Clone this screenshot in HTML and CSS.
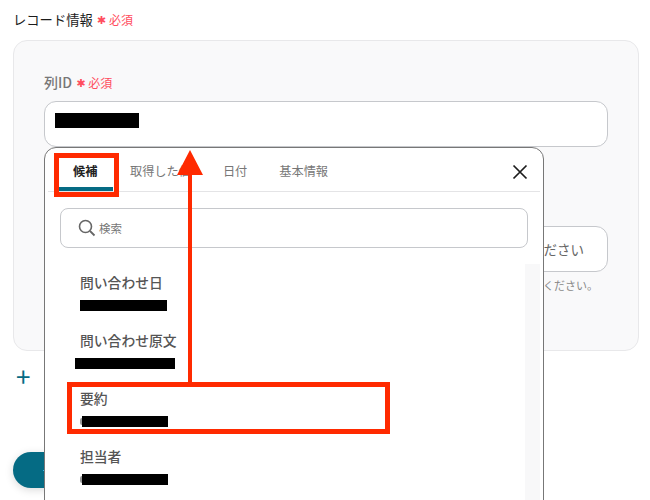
FILE: index.html
```html
<!DOCTYPE html>
<html lang="ja">
<head>
  <meta charset="UTF-8">
  <meta name="viewport" content="width=device-width, initial-scale=1.0">
  <title>レコード情報</title>
  <link rel="stylesheet" href="styles.css">
</head>
<body>
  <div class="page">
    <div class="section-title">
      <span class="title-text">レコード情報</span>
      <span class="required"><span class="star">✱</span>必須</span>
    </div>

    <div class="card">
      <div class="field-label">
        <span class="label-text">列ID</span>
        <span class="required"><span class="star">✱</span>必須</span>
      </div>
      <div class="field-input first-input"><span class="mask mask-value"></span></div>

      <div class="field-input second-input">選択してください</div>
      <div class="help-text">候補から選択してください。</div>
    </div>

    <div class="add-row">+</div>
    <div class="save-button"><span class="save-text">+</span></div>

    <!-- Dropdown -->
    <div class="dropdown">
      <div class="tabs">
        <div class="tab active">候補</div>
        <div class="tab">取得した値</div>
        <div class="tab">日付</div>
        <div class="tab">基本情報</div>
        <svg class="close-icon" width="16" height="16" viewBox="0 0 16 16">
          <path d="M1.5 1.5 L14.5 14.5 M14.5 1.5 L1.5 14.5" stroke="#1c1c1c" stroke-width="1.7" fill="none"/>
        </svg>
      </div>
      <div class="search">
        <svg class="search-icon" width="18" height="18" viewBox="0 0 18 18">
          <circle cx="7.5" cy="7.5" r="6" stroke="#666" stroke-width="1.6" fill="none"/>
          <path d="M12 12 L16.5 16.5" stroke="#666" stroke-width="1.8" fill="none"/>
        </svg>
        <span class="search-text">検索</span>
      </div>
      <div class="list-wrap">
        <div class="list">
          <div class="item">
            <div class="item-name">問い合わせ日</div>
            <span class="mask mask-a"></span>
          </div>
          <div class="item">
            <div class="item-name">問い合わせ原文</div>
            <span class="mask mask-b"></span>
          </div>
          <div class="item">
            <div class="item-name">要約</div>
            <span class="mask mask-c"></span>
          </div>
          <div class="item">
            <div class="item-name">担当者</div>
            <span class="mask mask-c"></span>
          </div>
        </div>
        <div class="scroll-track"></div>
      </div>
    </div>

    <!-- Annotations -->
    <div class="red-box box-tab"></div>
    <div class="red-box box-item"></div>
    <svg class="arrow" width="30" height="240" viewBox="0 0 30 240">
      <path d="M15 0 L28 25 L17 25 L17 237 L13 237 L13 25 L2 25 Z" fill="#ff2a00"/>
    </svg>
  </div>
</body>
</html>
```

FILE: styles.css
```css
body {
  font-family: "Noto Sans CJK JP", "Noto Sans", sans-serif;
  margin: 0;
  padding: 0;
  background-color: #ffffff;
  overflow: hidden;
}

.page {
  position: relative;
  width: 650px;
  height: 500px;
  overflow: hidden;
  padding: 8px 11px 0 13px;
  box-sizing: border-box;
}

.section-title {
  display: flex;
  align-items: center;
  height: 22px;
  margin-bottom: 10px;
}

.title-text {
  font-size: 13.3px;
  color: #1c1c1c;
}

.required {
  display: inline-flex;
  align-items: center;
  margin-left: 4px;
  font-size: 12px;
  color: #ff4d5e;
}

.star {
  font-family: "DejaVu Sans", sans-serif;
  font-size: 11px;
  line-height: 12px;
  margin-right: 3px;
  padding-top: 3px;
}

.card {
  height: 311px;
  box-sizing: border-box;
  padding: 30px 30px 0;
  background: #f9f9fa;
  border: 1px solid #e8e8ea;
  border-radius: 14px;
}

.field-label {
  display: flex;
  align-items: center;
  height: 22px;
  margin-bottom: 8px;
}

.label-text {
  font-size: 14px;
  font-weight: 500;
  color: #777777;
}

.field-input {
  display: flex;
  align-items: center;
  height: 46px;
  box-sizing: border-box;
  background: #ffffff;
  border: 1px solid #c6c8cc;
  border-radius: 12px;
  padding: 0 10px;
  font-size: 13.5px;
  color: #666666;
}

.second-input {
  justify-content: flex-end;
  margin-top: 79px;
  padding-right: 23px;
}

.help-text {
  margin-top: 5px;
  padding-right: 10px;
  text-align: right;
  font-size: 11px;
  color: #888888;
}

.mask {
  display: block;
  background: #000000;
}

.mask-value {
  width: 84px;
  height: 15px;
  margin-bottom: 8px;
}

.add-row {
  margin-top: 11px;
  padding-left: 3px;
  font-size: 26px;
  line-height: 28px;
  color: #056b84;
}

.save-button {
  position: absolute;
  left: 13px;
  top: 452px;
  width: 120px;
  height: 36px;
  padding-left: 30px;
  box-sizing: border-box;
  background: #056b84;
  border-radius: 18px;
  color: #ffffff;
  font-size: 14px;
  line-height: 36px;
  box-shadow: 0 2px 8px rgba(0, 0, 0, 0.15);
}

/* Dropdown */
.dropdown {
  position: absolute;
  left: 44px;
  top: 147px;
  width: 500px;
  height: 370px;
  box-sizing: border-box;
  padding: 0 3px;
  background: #ffffff;
  border: 1px solid #777777;
  border-radius: 12px 12px 0 0;
}

.tabs {
  display: flex;
  align-items: center;
  position: relative;
  height: 43px;
  padding-left: 10px;
  border-bottom: 1px solid #e4e4e6;
}

.tab {
  box-sizing: border-box;
  height: 43px;
  padding: 0 15px;
  margin-right: 2px;
  font-size: 12.2px;
  line-height: 46px;
  color: #777777;
}

.tab.active {
  width: 55px;
  font-weight: 700;
  color: #222222;
  border-bottom: 4px solid #056b84;
}

.close-icon {
  position: absolute;
  right: 12px;
  top: 16px;
}

.search {
  display: flex;
  align-items: center;
  height: 40px;
  box-sizing: border-box;
  margin: 16px 12px 0;
  padding-left: 17px;
  border: 1px solid #c6c8cc;
  border-radius: 8px;
}

.search-icon {
  margin-right: 3px;
}

.search-text {
  font-size: 11.5px;
  color: #777777;
}

.list-wrap {
  display: flex;
  justify-content: space-between;
  margin-top: 16px;
}

.list {
  padding: 8px 0 0 32px;
}

.item {
  height: 58px;
}

.item-name {
  height: 23px;
  font-size: 13.8px;
  line-height: 21px;
  font-weight: 500;
  color: #555555;
}

.item .mask {
  height: 11px;
  margin-top: 5px;
}

.mask-a {
  width: 87px;
}

.mask-b {
  width: 100px;
  margin-left: -5px;
}

.mask-c {
  position: relative;
  width: 86px;
  margin-left: 2px;
}

/* bit of the value that sticks out left of the black bar */
.mask-c::before {
  content: "";
  position: absolute;
  left: -2px;
  top: 2px;
  width: 2px;
  height: 7px;
  background: #999999;
  border-radius: 2px 0 0 2px;
}

.scroll-track {
  width: 15px;
  height: 260px;
  background: #f8f8f9;
}

/* Annotations */
.red-box {
  position: absolute;
  box-sizing: border-box;
  border: 5px solid #ff2a00;
}

.box-tab {
  left: 54px;
  top: 153px;
  width: 65px;
  height: 44px;
}

.box-item {
  left: 67px;
  top: 382px;
  width: 323px;
  height: 52px;
}

.arrow {
  position: absolute;
  left: 175px;
  top: 150px;
}
```
